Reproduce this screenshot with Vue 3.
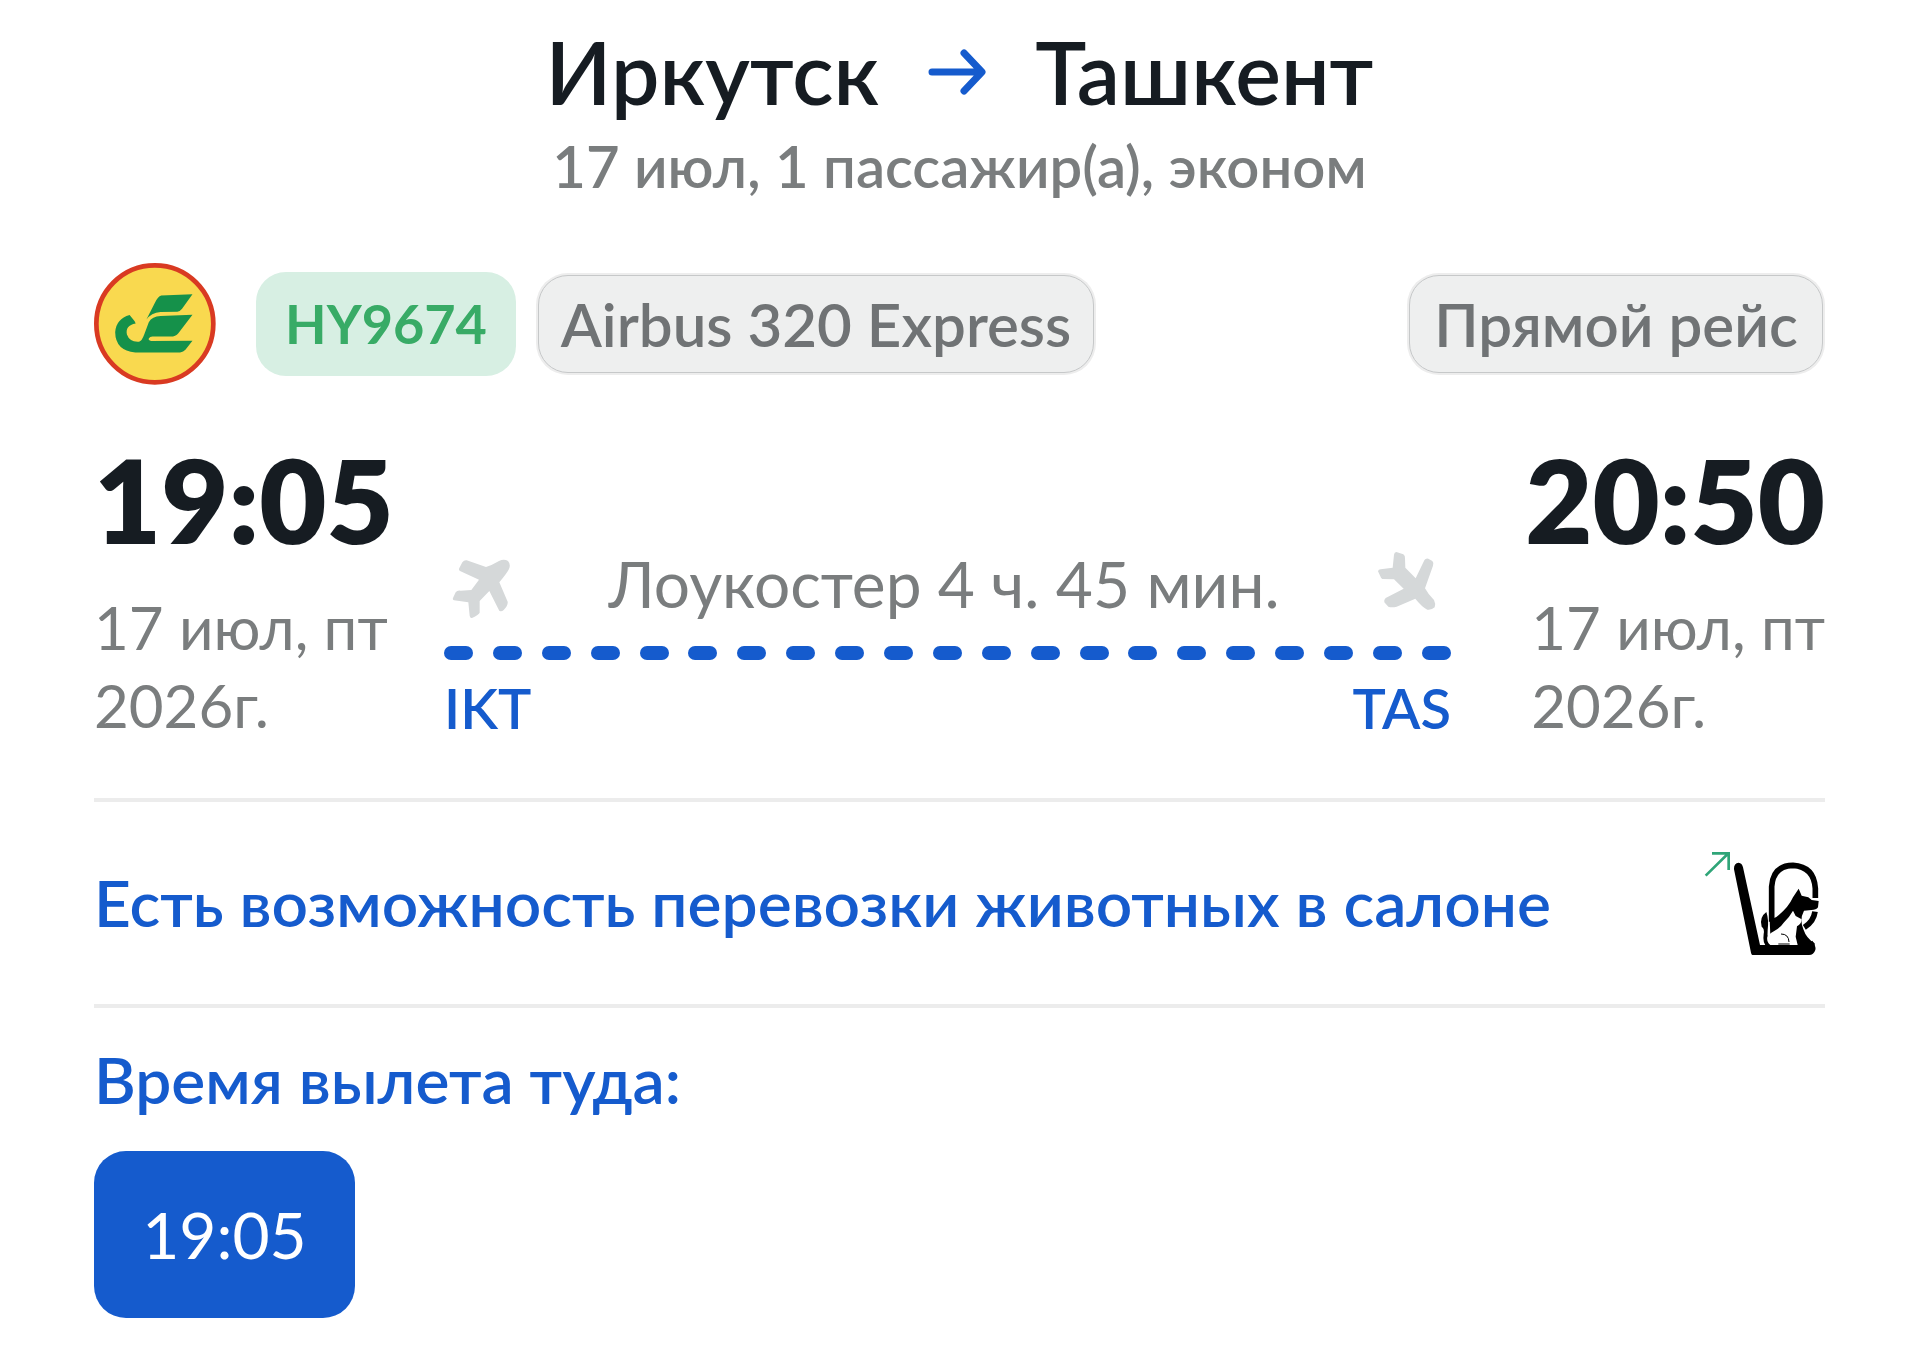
<template>
  <main class="ticket">
    <header class="head">
      <h1 class="route">
        <span>{{ flight.from }}</span>
        <svg class="routeArrow" viewBox="0 0 58 46" fill="none" aria-hidden="true">
          <path d="M4 23H53M36 4L54 23L36 42" />
        </svg>
        <span>{{ flight.to }}</span>
      </h1>
      <p class="summary">{{ flight.summary }}</p>
    </header>

    <section class="badges">
      <svg class="logo" viewBox="42 39 363 363" aria-hidden="true">
        <circle cx="223" cy="220" r="174" fill="#f9d94f" stroke="#d93a22" stroke-width="14" />
        <path
          fill="#15914a"
          d="M335 132L242 136Q232 139 224 156L198 207Q212 188 240 185L290 184Q298 183 304 175ZM335 193L240 197Q215 198 205 215L192 250Q184 272 176 273Q148 275 140 252Q134 225 166 219L163 212L148 194Q108 205 105 245Q106 300 165 305L298 305Q308 304 314 297L335 270L212 271Q203 270 205 264Q208 258 216 258L270 258Q285 258 293 248Z"
        />
      </svg>
      <span class="badge number">{{ flight.number }}</span>
      <span class="badge plain">{{ flight.plane }}</span>
      <span class="badge plain direct">Прямой рейс</span>
    </section>

    <section class="flight">
      <div class="point">
        <time class="time">{{ flight.departure }}</time>
        <p class="date">17 июл, пт<br>2026г.</p>
      </div>

      <div class="path">
        <div class="duration">
          <svg class="plane" viewBox="64 33 174 204" aria-hidden="true">
            <path d="M205 66Q220 58 232 66Q241 76 235 90Q230 101 206 130L231 188Q232 194 228 202Q218 218 210 217Q205 217 202 208L176 156L147 186V221Q145 227 124 237Q118 238 117 230L113 190L70 184Q64 183 68 175L75 160Q80 153 90 155L122 153L145 122L88 96Q83 93 86 87L95 70Q100 63 108 64L166 84Q185 78 205 66Z" />
          </svg>
          <span>Лоукостер 4 ч. 45 мин.</span>
          <svg class="plane" viewBox="174 33 174 204" aria-hidden="true">
            <path d="M229 39L250 46Q256 50 255 58L256 86L287 118L313 64Q317 57 325 59L337 66Q342 71 339 80L315 148Q325 167 342 183Q348 195 344 205Q335 214 322 212Q305 203 286 179L230 203Q215 206 205 203L193 190Q191 182 197 177L251 149L222 121L187 120Q183 119 181 112L174 97Q175 91 182 91L218 86L222 47Q223 39 229 39Z" />
          </svg>
        </div>
        <div class="dashes">
          <i v-for="n in 21" :key="n"></i>
        </div>
        <div class="codes">
          <span>{{ flight.fromCode }}</span>
          <span>{{ flight.toCode }}</span>
        </div>
      </div>

      <div class="point arrival">
        <time class="time">{{ flight.arrival }}</time>
        <p class="date">17 июл, пт<br>2026г.</p>
      </div>
    </section>

    <section class="pets">
      <p class="blueText">Есть возможность перевозки животных в салоне</p>
      <svg class="petIcon" viewBox="130 90 351 321" fill="none" aria-hidden="true">
        <path d="M138 167L207 99M157 100H207V150" stroke="#2fa578" stroke-width="8" />
        <!-- кресло -->
        <path fill="#000" d="M223 148Q222 129 237 128Q247 129 250 142L301 375H440L458 362Q470 375 467 390Q462 405 448 405H278Q275 404 274 398Z" />
        <path stroke="#000" stroke-width="17" d="M336 305V200Q340 137 400 136Q463 140 467 205V234M466 275Q462 305 434 322" />
        <!-- собака -->
        <path fill="#000" d="M417 206L426 227L446 232L456 240L477 243L475 262Q470 270 455 270L433 272Q418 300 432 330Q440 355 465 370L460 390L410 378L345 340L332 345L330 300L350 291Q385 265 400 232Z" />
        <path fill="#000" d="M320 276Q298 292 306 320Q315 326 312 342Q308 370 322 380H340Q320 360 324 330Q328 300 320 276Z" />
        <!-- кошка -->
        <path fill="#fff" d="M400 272L408 288L426 298Q425 313 412 319L408 350L414 375H332Q320 366 323 350Q331 338 345 332Q362 323 372 308Q389 292 400 272Z" />
        <path stroke="#000" stroke-width="3" d="M364 342Q387 342 388 366M356 372H390" />
      </svg>
    </section>

    <section class="departures">
      <h2 class="blueText">Время вылета туда:</h2>
      <button
        v-for="time in times"
        :key="time"
        type="button"
        class="timeButton"
        @click="selected = time"
      >{{ time }}</button>
    </section>
  </main>
</template>

<script setup>
import { ref } from 'vue'

const flight = {
  from: 'Иркутск',
  to: 'Ташкент',
  summary: '17 июл, 1 пассажир(а), эконом',
  number: 'HY9674',
  plane: 'Airbus 320 Express',
  departure: '19:05',
  arrival: '20:50',
  fromCode: 'IKT',
  toCode: 'TAS'
}

const times = ['19:05']
const selected = ref(times[0])
</script>

<style>
body {
  background: #fff;
}
</style>

<style scoped>
.ticket {
  padding: 18px 95px 52px 94px;
  font-family: Lato, 'Open Sans', sans-serif;
  color: #161c22;
}

h1, h2, p {
  margin: 0;
}

.head {
  text-align: center;
}

.route {
  display: flex;
  justify-content: center;
  align-items: center;
  gap: 49px;
  font-size: 86px;
  font-weight: 600;
  line-height: 108px;
}

.routeArrow {
  width: 58px;
  height: 46px;
  stroke: #155bcd;
  stroke-width: 7;
  stroke-linecap: round;
  stroke-linejoin: round;
}

.summary {
  font-size: 58px;
  font-weight: 600;
  line-height: 80px;
  color: #7a7d7e;
}

.badges {
  display: flex;
  align-items: center;
  margin-top: 57px;
}

.logo {
  width: 122px;
  height: 122px;
  margin-right: 40px;
}

.badge {
  box-sizing: border-box;
  border-radius: 30px;
  font-weight: 600;
  text-align: center;
  white-space: nowrap;
}

.number {
  min-width: 260px;
  padding: 0 24px;
  font-size: 54px;
  font-weight: 700;
  line-height: 104px;
  color: #38ab66;
  background: #d7efe3;
}

.plain {
  min-width: 414px;
  padding: 0 16px;
  border: 1px solid #c6c8c9;
  box-shadow: 0 0 0 2px #ededed;
  font-size: 60px;
  line-height: 96px;
  color: #707375;
  background: #eeefef;
}

.number + .plain {
  min-width: 556px;
  margin-left: 22px;
}

.badges .direct {
  margin-left: auto;
  margin-right: 2px;
}

.flight {
  display: grid;
  grid-template-columns: 288px 1fr 312px;
  column-gap: 62px;
  align-items: end;
  margin-top: 55px;
}

.point {
  white-space: nowrap;
}

.arrival {
  display: flex;
  flex-direction: column;
  align-items: flex-end;
}

.time {
  display: block;
  font-size: 116px;
  font-weight: 800;
  line-height: 120px;
}

.date {
  margin-top: 28px;
  font-size: 60px;
  line-height: 78px;
  color: #7a7d7e;
}

.duration {
  display: flex;
  justify-content: space-between;
  align-items: center;
  padding: 0 15px 0 8px;
  font-size: 64px;
  line-height: 76px;
  color: #7a7d7e;
  white-space: nowrap;
}

.plane {
  width: 58px;
  height: 68px;
  fill: #d5d8d9;
}

.dashes {
  display: flex;
  justify-content: space-between;
  margin-top: 24px;
}

.dashes i {
  width: 29px;
  height: 14px;
  border-radius: 7px;
  background: #155bcd;
}

.codes {
  display: flex;
  justify-content: space-between;
  margin-top: 12px;
  font-size: 56px;
  font-weight: 600;
  line-height: 72px;
  color: #155bcd;
}

.pets {
  display: flex;
  justify-content: space-between;
  align-items: center;
  height: 202px;
  margin-top: 54px;
  padding-right: 5px;
  border-top: 4px solid #ececec;
  border-bottom: 4px solid #ececec;
}

.blueText {
  font-size: 64px;
  font-weight: 600;
  line-height: 80px;
  color: #155bcd;
}

.petIcon {
  width: 117px;
  height: 107px;
}

.departures {
  padding-top: 32px;
}

.timeButton {
  display: block;
  min-width: 261px;
  margin-top: 31px;
  padding: 0 48px;
  border: 0;
  border-radius: 32px;
  font-family: inherit;
  font-size: 64px;
  line-height: 167px;
  color: #fff;
  background: #155bcd;
  cursor: pointer;
}
</style>
